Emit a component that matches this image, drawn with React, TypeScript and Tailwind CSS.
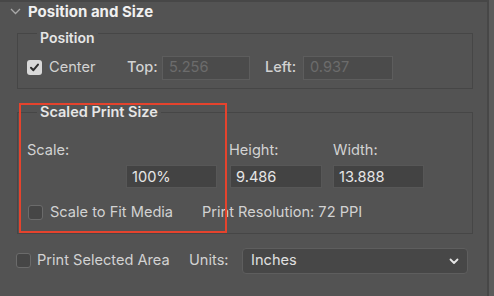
import type { PropsWithChildren } from "react";

function Checkbox({ checked = false }: { checked?: boolean }) {
  if (checked) {
    return (
      <span className="flex h-[15px] w-[15px] shrink-0 items-center justify-center rounded-[3px] bg-[#d9d9d9]">
        <svg width="11" height="11" viewBox="0 0 11 11">
          <path d="M2 5.8 L4.4 8.2 L9 2.6" fill="none" stroke="#2f2f2f" strokeWidth="2" strokeLinecap="round" strokeLinejoin="round" />
        </svg>
      </span>
    );
  }
  return <span className="h-[15px] w-[15px] shrink-0 rounded-[3px] border border-[#6b6b6b] bg-[#464646]" />;
}

function Group({ title, legendClass, className, children }: PropsWithChildren<{ title: string; legendClass: string; className?: string }>) {
  return (
    <div className={`mx-[14px] ml-[17px] border border-[#464646] ${className ?? ""}`}>
      <div className={`ml-[19px] w-fit bg-[#535353] px-[3px] font-semibold leading-[16px] text-[#e6e6e6] ${legendClass}`}>
        {title}
      </div>
      {children}
    </div>
  );
}

export default function App() {
  return (
    <div className="h-[296px] w-[494px] overflow-hidden bg-[#5b5b5b] font-['Inter',sans-serif]">
      <div className="relative h-full w-[489px] border-r-2 border-t-2 border-[#474747] bg-[#535353]">
        <div className="flex h-[20px] items-center pl-[10px] pt-[1px]">
          <svg width="11" height="7" viewBox="0 0 11 7" className="mt-[-2px]">
            <path d="M1 1 L5.5 5.5 L10 1" fill="none" stroke="#a9a9a9" strokeWidth="1.3" />
          </svg>
          <span className="ml-[7px] text-[15px] font-bold text-[#f0f0f0]">Position and Size</span>
        </div>

        <Group title="Position" legendClass="-mt-[4px] text-[14px]" className="mt-[11px]">
          <div className="flex items-center pb-[8px] pl-[9px] pt-[10px] text-[14.6px] text-[#d2d2d2]">
            <div className="flex w-[100px] items-center gap-[7px]">
              <Checkbox checked />
              <span>Center</span>
            </div>
            <span className="w-[35px] font-medium">Top:</span>
            <div className="flex h-[24px] w-[88px] items-center border border-[#5d5d5d] bg-[#4b4b4b] px-[6px] text-[#6c6c6c]">5.256</div>
            <span className="ml-[15px] w-[38px] font-medium">Left:</span>
            <div className="flex h-[24px] w-[90px] items-center border border-[#5d5d5d] bg-[#4b4b4b] px-[6px] text-[#6c6c6c]">0.937</div>
          </div>
        </Group>

        <Group title="Scaled Print Size" legendClass="-mt-[9px] text-[14.5px]" className="mt-[23px]">
          <div className="grid grid-cols-[202px_104px_120px] pl-[9px] pt-[22px] text-[14.6px] leading-[16px] text-[#d2d2d2]">
            <span>Scale:</span>
            <span>Height:</span>
            <span>Width:</span>
            <div className="ml-[99px] mt-[7px] flex h-[23px] w-[91px] items-center border border-[#575757] bg-[#434343] px-[5px] text-[#e6e6e6]">100%</div>
            <div className="ml-px mt-[7px] flex h-[23px] w-[92px] items-center border border-[#575757] bg-[#434343] px-[5px] text-[#e6e6e6]">9.486</div>
            <div className="mt-[7px] flex h-[23px] w-[91px] items-center border border-[#575757] bg-[#434343] px-[5px] text-[#e6e6e6]">13.888</div>
          </div>
          <div className="flex items-center pb-[13px] pl-[10px] pt-[16px] text-[14.6px] leading-[16px] text-[#d2d2d2]">
            <div className="flex w-[174px] items-center gap-[7px]">
              <Checkbox />
              <span>Scale to Fit Media</span>
            </div>
            <span>Print Resolution: 72 PPI</span>
          </div>
        </Group>

        <div className="mt-[14px] flex items-center pl-[16px] text-[14.6px] text-[#d2d2d2]">
          <div className="flex w-[173px] items-center gap-[6px]">
            <Checkbox />
            <span>Print Selected Area</span>
          </div>
          <span className="w-[53px]">Units:</span>
          <div className="flex h-[26px] w-[226px] items-center justify-between rounded-[4px] border border-[#5e5e5e] bg-[#474747] pl-[8px] pr-[8px] text-[#e0e0e0]">
            <span>Inches</span>
            <svg width="10" height="7" viewBox="0 0 10 7">
              <path d="M1.5 1.5 L5 5 L8.5 1.5" fill="none" stroke="#e6e6e6" strokeWidth="1.8" strokeLinecap="round" strokeLinejoin="round" />
            </svg>
          </div>
        </div>

        <div className="absolute left-[19px] top-[101px] h-[130px] w-[208px] border-2 border-[#e5432d]" />
      </div>
    </div>
  );
}
